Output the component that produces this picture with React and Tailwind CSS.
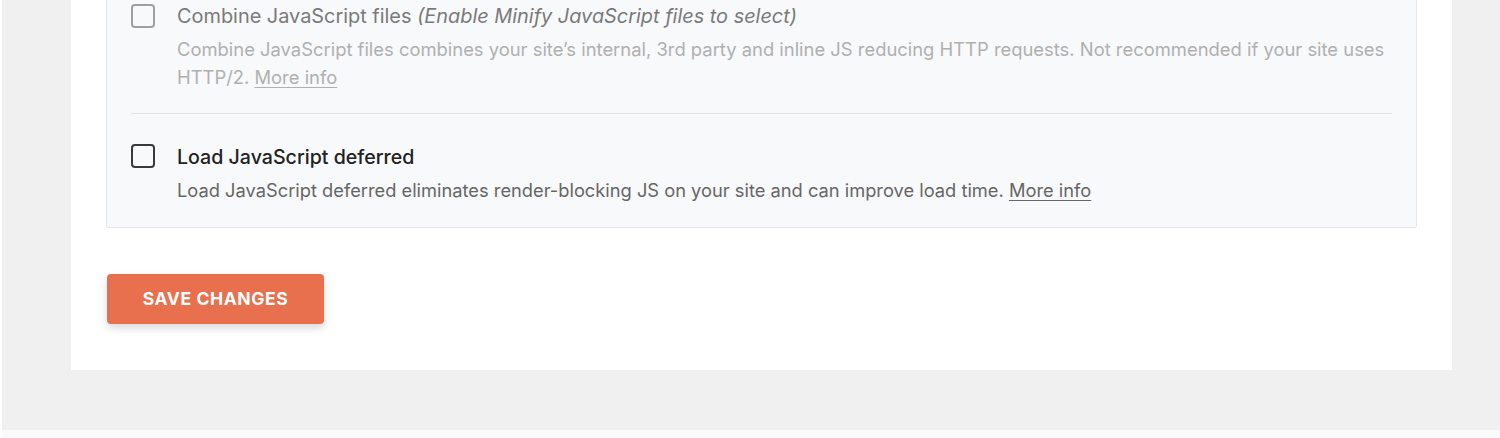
import React from "react";

function Checkbox({ disabled }) {
  return (
    <div
      className={
        "h-[24px] w-[24px] shrink-0 rounded-[4px] border-2 bg-transparent " +
        (disabled ? "border-[#a0a0a0]" : "border-[#3a3a3a]")
      }
    />
  );
}

export default function App() {
  return (
    <div
      className="w-[1500px] h-[438px] overflow-hidden bg-white pl-[2px]"
      style={{ fontFamily: "Inter, 'Open Sans', sans-serif" }}
    >
      <div className="h-[430px] overflow-hidden bg-[#f0f0f0] pl-[69px] pr-[48px]">
        <div className="bg-white w-[1381px] px-[35px] pb-[46px] overflow-hidden">
          <div className="-mt-[100px] border border-[#e6e7ea] bg-[#f8f9fb] px-[24px] pt-[101px] pb-[23px] rounded-[2px]">
            <div className="flex gap-[22px] pb-[22px]">
              <div className="pt-[2px]"><Checkbox disabled /></div>
              <div className="flex-1">
                <div className="text-[19.9px] leading-[28px] text-[#7a7a7a]">
                  Combine JavaScript files{" "}
                  <span className="italic">(Enable Minify JavaScript files to select)</span>
                </div>
                <div className="mt-[5px] text-[18.4px] leading-[28px] text-[#b0b0b0]">
                  Combine JavaScript files combines your site’s internal, 3rd party and inline JS reducing HTTP requests. Not recommended if your site uses HTTP/2.{" "}
                  <a className="underline underline-offset-[3px]">More info</a>
                </div>
              </div>
            </div>
            <div className="h-px bg-[#e3e4e7]" />
            <div className="flex gap-[22px] pt-[29px]">
              <div className="pt-[1px]"><Checkbox /></div>
              <div className="flex-1">
                <div className="text-[19.6px] leading-[28px] font-medium text-[#222]">
                  Load JavaScript deferred
                </div>
                <div className="mt-[5px] text-[18.3px] leading-[28px] text-[#666]">
                  Load JavaScript deferred eliminates render-blocking JS on your site and can improve load time.{" "}
                  <a className="underline underline-offset-[3px]">More info</a>
                </div>
              </div>
            </div>
          </div>
          <div className="pt-[46px] pl-[1px]">
            <button className="h-[50px] w-[217px] rounded-[4px] bg-[#e8704e] text-white font-bold text-[17.5px] tracking-[0.6px] shadow-[0_4px_8px_rgba(0,0,0,0.15)]">
              SAVE CHANGES
            </button>
          </div>
        </div>
      </div>
      <div className="h-[8px] bg-[#fafafa]" />
    </div>
  );
}
